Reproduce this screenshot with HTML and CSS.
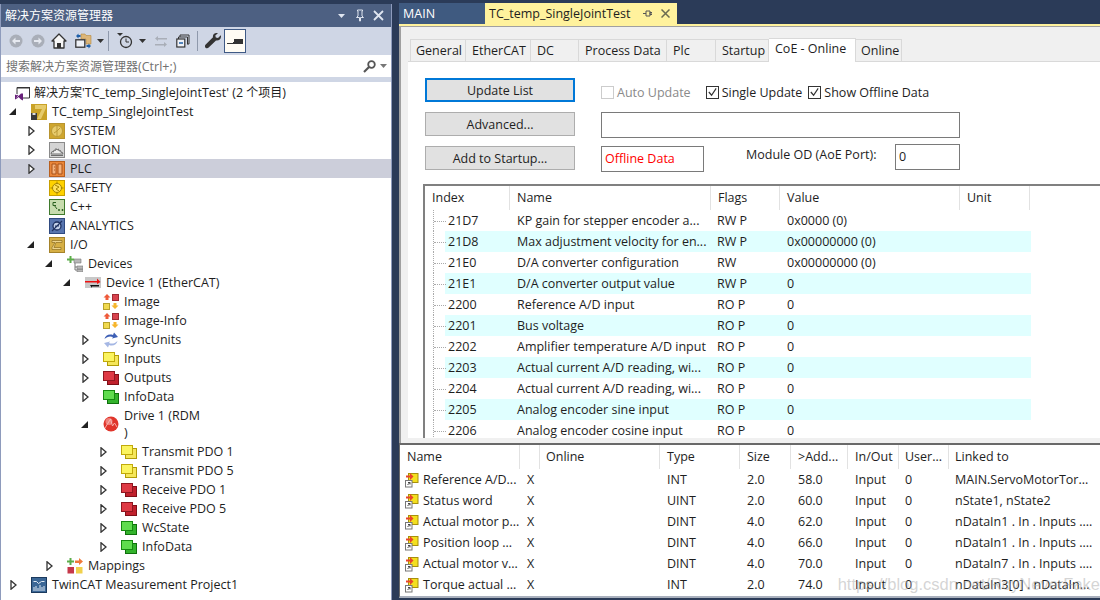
FILE: index.html
```html
<!DOCTYPE html>
<html lang="zh">
<head>
<meta charset="utf-8">
<title>TC_temp_SingleJointTest</title>
<link rel="stylesheet" href="styles.css">
</head>
<body>
<svg class="sprite" xmlns="http://www.w3.org/2000/svg">
  <defs>
    <symbol id="i-sol" viewBox="0 0 16 16"><path d="M3 9V2.500h12.500V13H9" fill="#fff" stroke="#333"/><path d="M3 2h13v1.500H3z" fill="#333"/><path d="M1 9.500v5l2-1v-3zM9 8.500v7l-2-1-2.500-2.500L3 13.500l-.5-1 1.500-1-1.500-1 .5-1L4.500 11 7 8.500z" fill="#68217a"/></symbol>
    <symbol id="i-proj" viewBox="0 0 16 16"><rect width="16" height="16" fill="#c9a227"/><path d="M4 1h11v3l-5 11H6l5-10H4z" fill="#e6cb6b"/><path d="M0 9h6v7H0z" fill="#3a3a3a"/><path d="M1.500 9h3v2h-3z" fill="#ddd"/></symbol>
    <symbol id="i-sys" viewBox="0 0 16 16"><rect x=".5" y=".5" width="15" height="15" fill="#cfa62e" stroke="#b8942f"/><circle cx="8" cy="8" r="5.500" fill="#e8cc6c" stroke="#bb9936"/><path d="M8 3v10M8 8l3-3M8 8l-3 2" stroke="#bb9936" fill="none"/></symbol>
    <symbol id="i-mot" viewBox="0 0 16 16"><rect x=".5" y=".5" width="15" height="15" fill="#d4d4d4" stroke="#8a8a8a"/><path d="M2 12h12l-1-2-1 .5-.5-2-1.500.5-.5-2-1.500 1L7 6.500 6.500 8.500 5 8l-.5 2-1.500-.5z" fill="#eee" stroke="#6d6d6d"/><path d="M2 13.500h12" stroke="#6d6d6d"/></symbol>
    <symbol id="i-plc" viewBox="0 0 16 16"><rect x=".5" y=".5" width="15" height="15" fill="#e9863a" stroke="#b85f1e"/><path d="M3 3h4v10H3zM9 3h4v10H9z" fill="#f5b27c" stroke="#a8521a"/><path d="M5 6h1M5 9h1" stroke="#a8521a"/></symbol>
    <symbol id="i-saf" viewBox="0 0 16 16"><rect x=".5" y=".5" width="15" height="15" fill="#ffd200" stroke="#c79f00"/><circle cx="8" cy="8" r="4.500" fill="#ffe25c" stroke="#a58400"/><path d="M6 5l4 2-3 2 3 2M8 1.500v2M8 12.500v2M1.500 8h2M12.500 8h2" stroke="#a58400" fill="none"/></symbol>
    <symbol id="i-cpp" viewBox="0 0 16 16"><rect x=".5" y=".5" width="15" height="15" fill="#c8dcae" stroke="#3f7a2c"/><path d="M7 3.500H4v3h3M5 6l3 4M9 11h2M10 10v2M12.500 11h2M13.500 10v2" stroke="#2d6120" fill="none"/></symbol>
    <symbol id="i-ana" viewBox="0 0 16 16"><rect x=".5" y=".5" width="15" height="15" fill="#5875ae" stroke="#2f4a80"/><circle cx="8" cy="8" r="4" fill="#c4d2ea" stroke="#1e3160" stroke-width="1.300"/><path d="M3 13L13 3M6 8h4" stroke="#1e3160" stroke-width="1.200"/></symbol>
    <symbol id="i-io" viewBox="0 0 16 16"><rect x=".5" y=".5" width="15" height="15" fill="#d6af45" stroke="#a5832a"/><path d="M3 3.500h10v2H7l-2 5h7v2H3v-2l3-5H3z" fill="#ecd38b" stroke="#8e6f20" stroke-width=".7"/></symbol>
    <symbol id="i-devs" viewBox="0 0 16 16"><path d="M7 3h7v4H7zM10 10h6v3h-6zM10 13.500h6V16h-6z" fill="#b8b8b8" stroke="#777" stroke-width=".6"/><path d="M8 7v7h2M8 11h2" stroke="#777" fill="none"/><path d="M2.500 0h2v2.500H7v2H4.500V7h-2V4.500H0v-2h2.500z" fill="#5cad4a"/></symbol>
    <symbol id="i-dev" viewBox="0 0 16 16"><rect y="2" width="16" height="11" fill="#c8c8c8"/><path d="M0 6h12V3.500L15.500 7 12 9V7.500H0z" fill="#ee1111"/><path d="M5 10h9v1.500H7V13z" fill="#111"/></symbol>
    <symbol id="i-img" viewBox="0 0 16 16"><path d="M4 0l3.500 3.500H5.500V6h-3V3.500H.5z" fill="#ef5a3a"/><rect x="9.500" y=".5" width="6" height="6" fill="#d8434d" stroke="#9f2a33"/><rect x=".5" y="9.500" width="6" height="6" fill="#f0d94f" stroke="#b6a22c"/><path d="M10.500 9h3v2.500h2L12 15l-3.500-3.500h2z" fill="#f6b52c"/></symbol>
    <symbol id="i-sync" viewBox="0 0 16 16"><path d="M1.500 7C2 3.500 6 1.500 10 3l1-2.500L15 5l-6 1.500 1-1.500C7 3.800 4 4.500 1.500 7z" fill="#3d5fb5"/><path d="M14.500 9c-.5 3.500-4.500 5.500-8.500 4l-1 2.500L1 11l6-1.500-1 1.500c3 1.200 6 .5 8.500-2z" fill="#a5b7e4"/></symbol>
    <symbol id="i-y" viewBox="0 0 16 16"><rect x="4.500" y="4.500" width="11" height="10" fill="#f5e65a" stroke="#b09c08"/><rect x=".5" y="1.500" width="11" height="9" fill="#fbf45f" stroke="#c1a90a"/></symbol>
    <symbol id="i-r" viewBox="0 0 16 16"><rect x="4.500" y="4.500" width="11" height="10" fill="#c0202c" stroke="#7e0f17"/><rect x=".5" y="1.500" width="11" height="9" fill="#df3a45" stroke="#8f1720"/></symbol>
    <symbol id="i-g" viewBox="0 0 16 16"><rect x="4.500" y="4.500" width="11" height="10" fill="#33b32c" stroke="#0f700c"/><rect x=".5" y="1.500" width="11" height="9" fill="#5fdc4e" stroke="#158a10"/></symbol>
    <symbol id="i-drive" viewBox="0 0 16 16"><circle cx="8" cy="8" r="7.500" fill="#e0352b"/><circle cx="6" cy="5.500" r="3.500" fill="#f0817a"/><path d="M2 12L7.500 3l2 7 2-3 2.500 4" stroke="#f7c4c0" stroke-width=".8" fill="none"/></symbol>
    <symbol id="i-map" viewBox="0 0 16 16"><path d="M2.500 0h2v2.500H7v2H4.500V7h-2V4.500H0v-2h2.500z" fill="#5cad4a"/><path d="M8 2.500h4V0l4 3.500L12 7V5H8z" fill="#ef7a3a"/><rect x=".5" y="9" width="6.500" height="6.500" fill="#c6384a"/><rect x="9" y="9" width="6.500" height="6.500" fill="#f1d14c"/></symbol>
    <symbol id="i-meas" viewBox="0 0 16 16"><rect x=".5" y=".5" width="15" height="15" fill="#3b6796" stroke="#1b3a5e"/><path d="M2.500 4.500h3l2 2 3-2h3" stroke="#dfe9f3" fill="none"/><path d="M3 14V10M5 14V9M7 14v-3M9 14V8M11 14v-4M13 14V9" stroke="#dfe9f3"/></symbol>
    <symbol id="i-var" viewBox="0 0 14 16"><rect x="3.500" y="1.500" width="9.500" height="9" fill="#f3df1f" stroke="#a78f0c"/><path d="M1 3.500h4V1l3.500 3.500L5 8V5.500H1z" fill="#e8452a"/><rect x=".5" y="8.500" width="6.500" height="6.500" fill="#fff" stroke="#777"/><path d="M2.500 13l2.500-2.500M3 10.500h2V12.500" stroke="#444" fill="none"/></symbol>
    <symbol id="t-open" viewBox="0 0 7 10"><path d="M1 .8L6 5 1 9.200z" fill="#fff" stroke="#333" stroke-width="1.300"/></symbol>
    <symbol id="t-shut" viewBox="0 0 7 7"><path d="M7 0v7H0z" fill="#222"/></symbol>
    <symbol id="t-drop" viewBox="0 0 7 4"><path d="M0 0h7L3.500 4z"/></symbol>
  </defs>
</svg>

<div class="app">
  <aside class="left">
    <header class="title">
      <span class="title-text">解决方案资源管理器</span>
      <span class="title-tools">
        <svg class="drop-sm" width="7" height="4"><use href="#t-drop"/></svg>
        <svg width="10" height="13" viewBox="0 0 10 13"><path d="M2.500 1h5v1H7v5l1.500 1.500H5.500V12h-1V8.500H1.500L3 7V2h-.5z" fill="none" stroke="#dfe5f0"/></svg>
        <svg width="11" height="11" viewBox="0 0 11 11"><path d="M1 1l9 9M10 1l-9 9" stroke="#dfe5f0" stroke-width="1.800"/></svg>
      </span>
    </header>
    <nav class="toolbar">
      <svg class="tb t1" width="18" height="18" viewBox="0 0 18 18"><circle cx="9" cy="9" r="6.500" fill="#a9aeb8"/><path d="M5 9l3.500-3.500V8H13v2H8.500v2.500z" fill="#e6e9f0"/></svg>
      <svg class="tb t2" width="18" height="18" viewBox="0 0 18 18"><circle cx="9" cy="9" r="6.500" fill="#a9aeb8"/><path d="M13 9L9.500 5.500V8H5v2h4.500v2.500z" fill="#e6e9f0"/></svg>
      <svg class="tb t2" width="16" height="16" viewBox="0 0 16 16"><path d="M8 1L1 8h2v7h10V8h2z" fill="#f6f6f6" stroke="#333" stroke-width="1.300" stroke-linejoin="round"/><path d="M6 15v-5h4v5z" fill="#333"/></svg>
      <svg class="tb t3" width="17" height="16" viewBox="0 0 17 16"><path d="M6 1h4l1 1.500h5V11h-5V6H6z" fill="#dcb67a" stroke="#b58a3c" stroke-width=".6"/><rect x=".8" y="6.800" width="9" height="7.400" fill="#eef1f7" stroke="#333" stroke-width="1.300"/><path d="M1 3l2.500-2.500V2h2v2h-2v1.500zM16 13l-2.500 2.500V14h-2v-2h2v-1.500z" fill="#1e5fa8"/></svg>
      <svg class="drop t4" width="7" height="4"><use href="#t-drop"/></svg>
      <span class="sep s1"></span>
      <svg class="tb t5" width="18" height="18" viewBox="0 0 18 18"><path d="M1 1h6L4 4z" fill="#333"/><circle cx="10" cy="10" r="5.500" fill="none" stroke="#333" stroke-width="1.300"/><path d="M10 6.500V10h3" fill="none" stroke="#333"/></svg>
      <svg class="drop t6" width="7" height="4"><use href="#t-drop"/></svg>
      <svg class="tb t7" width="14" height="14" viewBox="0 0 14 14"><path d="M13 4H4V2L1 4.500 4 7V5.500h9zM1 10h9V8l3 2.500L10 13v-1.500H1z" fill="#a9aeb8"/></svg>
      <svg class="tb t8" width="14" height="14" viewBox="0 0 14 14"><path d="M4 3V1h9v9h-2M2.500 5V3h9v7" fill="none" stroke="#333"/><rect x=".8" y="5" width="8" height="8" fill="#eef1f7" stroke="#333" stroke-width="1.200"/><path d="M3 9h4" stroke="#1e5fa8" stroke-width="1.500"/></svg>
      <span class="sep s2"></span>
      <svg class="tb t9" width="16" height="16" viewBox="0 0 16 16"><path d="M11.500 0c-2.500 0-4 2-3.500 4.300L.7 11.500c-1 1-1 2.300-.2 3.200s2.300.9 3.200-.1L11 7.500C13.700 8 16 6.300 16 3.500c0-.4 0-.8-.2-1.200L13 5 10.800 4.500 10.300 2.500 12.900.2C12.400 0 12 0 11.500 0z" fill="#333"/></svg>
      <button class="pin" type="button"><svg width="16" height="6" viewBox="0 0 16 6"><path d="M0 5h6V4h1V1h9v5H0z" fill="#333"/></svg></button>
    </nav>
    <div class="search">
      <span class="search-text"><span class="cjk">搜索解决方案资源管理器</span>(Ctrl+;)</span>
      <span class="search-ic">
        <svg width="13" height="13" viewBox="0 0 13 13"><circle cx="8.500" cy="4.500" r="3.300" fill="none" stroke="#555" stroke-width="1.800"/><path d="M6 7l-5 5" stroke="#555" stroke-width="2.200"/></svg>
        <svg class="drop-gr" width="7" height="4"><use href="#t-drop"/></svg>
      </span>
    </div>
    <div class="band"></div>
    <ul class="tree">
      <li class="row root"><svg class="ic"><use href="#i-sol"/></svg><span><span class="cjk">解决方案</span>'TC_temp_SingleJointTest' (2 <span class="cjk">个项目</span>)</span></li>
      <li class="row l0"><span class="tw"><svg class="sh"><use href="#t-shut"/></svg></span><svg class="ic"><use href="#i-proj"/></svg><span>TC_temp_SingleJointTest</span></li>
      <li class="row l1"><span class="tw"><svg class="op"><use href="#t-open"/></svg></span><svg class="ic"><use href="#i-sys"/></svg><span>SYSTEM</span></li>
      <li class="row l1"><span class="tw"><svg class="op"><use href="#t-open"/></svg></span><svg class="ic"><use href="#i-mot"/></svg><span>MOTION</span></li>
      <li class="row l1 sel"><span class="tw"><svg class="op"><use href="#t-open"/></svg></span><svg class="ic"><use href="#i-plc"/></svg><span>PLC</span></li>
      <li class="row l1"><span class="tw"></span><svg class="ic"><use href="#i-saf"/></svg><span>SAFETY</span></li>
      <li class="row l1"><span class="tw"></span><svg class="ic"><use href="#i-cpp"/></svg><span>C++</span></li>
      <li class="row l1"><span class="tw"></span><svg class="ic"><use href="#i-ana"/></svg><span>ANALYTICS</span></li>
      <li class="row l1"><span class="tw"><svg class="sh"><use href="#t-shut"/></svg></span><svg class="ic"><use href="#i-io"/></svg><span>I/O</span></li>
      <li class="row l2"><span class="tw"><svg class="sh"><use href="#t-shut"/></svg></span><svg class="ic"><use href="#i-devs"/></svg><span>Devices</span></li>
      <li class="row l3"><span class="tw"><svg class="sh"><use href="#t-shut"/></svg></span><svg class="ic"><use href="#i-dev"/></svg><span>Device 1 (EtherCAT)</span></li>
      <li class="row l4"><span class="tw"></span><svg class="ic"><use href="#i-img"/></svg><span>Image</span></li>
      <li class="row l4"><span class="tw"></span><svg class="ic"><use href="#i-img"/></svg><span>Image-Info</span></li>
      <li class="row l4"><span class="tw"><svg class="op"><use href="#t-open"/></svg></span><svg class="ic"><use href="#i-sync"/></svg><span>SyncUnits</span></li>
      <li class="row l4"><span class="tw"><svg class="op"><use href="#t-open"/></svg></span><svg class="ic"><use href="#i-y"/></svg><span>Inputs</span></li>
      <li class="row l4"><span class="tw"><svg class="op"><use href="#t-open"/></svg></span><svg class="ic"><use href="#i-r"/></svg><span>Outputs</span></li>
      <li class="row l4"><span class="tw"><svg class="op"><use href="#t-open"/></svg></span><svg class="ic"><use href="#i-g"/></svg><span>InfoData</span></li>
      <li class="row l4 tall"><span class="tw"><svg class="sh"><use href="#t-shut"/></svg></span><svg class="ic"><use href="#i-drive"/></svg><span class="wrap">Drive 1 (RDM<br>)</span></li>
      <li class="row l5"><span class="tw"><svg class="op"><use href="#t-open"/></svg></span><svg class="ic"><use href="#i-y"/></svg><span>Transmit PDO 1</span></li>
      <li class="row l5"><span class="tw"><svg class="op"><use href="#t-open"/></svg></span><svg class="ic"><use href="#i-y"/></svg><span>Transmit PDO 5</span></li>
      <li class="row l5"><span class="tw"><svg class="op"><use href="#t-open"/></svg></span><svg class="ic"><use href="#i-r"/></svg><span>Receive PDO 1</span></li>
      <li class="row l5"><span class="tw"><svg class="op"><use href="#t-open"/></svg></span><svg class="ic"><use href="#i-r"/></svg><span>Receive PDO 5</span></li>
      <li class="row l5"><span class="tw"><svg class="op"><use href="#t-open"/></svg></span><svg class="ic"><use href="#i-g"/></svg><span>WcState</span></li>
      <li class="row l5"><span class="tw"><svg class="op"><use href="#t-open"/></svg></span><svg class="ic"><use href="#i-g"/></svg><span>InfoData</span></li>
      <li class="row l2"><span class="tw"><svg class="op"><use href="#t-open"/></svg></span><svg class="ic"><use href="#i-map"/></svg><span>Mappings</span></li>
      <li class="row l0"><span class="tw"><svg class="op"><use href="#t-open"/></svg></span><svg class="ic"><use href="#i-meas"/></svg><span>TwinCAT Measurement Project1</span></li>
    </ul>
  </aside>

  <main class="right">
    <div class="doc-tabs">
      <span class="doc-tab">MAIN</span>
      <span class="doc-tab active">TC_temp_SingleJointTest
        <svg class="doc-pin" width="9" height="9" viewBox="0 0 9 9"><path d="M0 4.500h3M3 2h4v5H3zM7 3.500h2v2H7z" fill="none" stroke="#555"/></svg>
        <svg class="doc-x" width="9" height="9" viewBox="0 0 9 9"><path d="M.5.500l8 8M8.500.500l-8 8" stroke="#6b6b50" stroke-width="1.500"/></svg>
      </span>
    </div>
    <div class="doc-line"></div>
    <section class="upper">
      <div class="tabs">
        <span class="tab w1">General</span>
        <span class="tab w2">EtherCAT</span>
        <span class="tab w3">DC</span>
        <span class="tab w4">Process Data</span>
        <span class="tab w5">Plc</span>
        <span class="tab w6">Startup</span>
        <span class="tab w7 on">CoE - Online</span>
        <span class="tab w8">Online</span>
      </div>
      <div class="page">
        <div class="form">
          <div class="btns">
            <button class="btn focus" type="button">Update List</button>
            <button class="btn" type="button">Advanced...</button>
            <button class="btn" type="button">Add to Startup...</button>
          </div>
          <div class="opts">
            <div class="checks">
              <span class="chk off"></span><span class="lbl dis">Auto Update</span>
              <span class="chk"><svg width="12" height="12" viewBox="0 0 12 12"><path d="M2 6l3 3.500L10 2" fill="none" stroke="#333" stroke-width="1.300"/></svg></span><span class="lbl l-s">Single Update</span>
              <span class="chk"><svg width="12" height="12" viewBox="0 0 12 12"><path d="M2 6l3 3.500L10 2" fill="none" stroke="#333" stroke-width="1.300"/></svg></span><span class="lbl">Show Offline Data</span>
            </div>
            <div class="box wide"></div>
            <div class="last">
              <div class="box offline">Offline Data</div>
              <span class="mod">Module OD (AoE Port):</span>
              <div class="box port">0</div>
            </div>
          </div>
        </div>
        <div class="list">
          <div class="l-head">
            <span class="h h1">Index</span><span class="h h2">Name</span><span class="h h3">Flags</span><span class="h h4">Value</span><span class="h h5">Unit</span><span class="h h6"></span>
          </div>
          <div class="l-row"><span class="dots"></span><span class="c1">21D7</span><span class="c2">KP gain for stepper encoder a...</span><span class="c3">RW P</span><span class="c4">0x0000 (0)</span></div>
          <div class="l-row alt"><span class="dots"></span><span class="c1">21D8</span><span class="c2">Max adjustment velocity for en...</span><span class="c3">RW P</span><span class="c4">0x00000000 (0)</span></div>
          <div class="l-row"><span class="dots"></span><span class="c1">21E0</span><span class="c2">D/A converter configuration</span><span class="c3">RW</span><span class="c4">0x00000000 (0)</span></div>
          <div class="l-row alt"><span class="dots"></span><span class="c1">21E1</span><span class="c2">D/A converter output value</span><span class="c3">RW P</span><span class="c4">0</span></div>
          <div class="l-row"><span class="dots"></span><span class="c1">2200</span><span class="c2">Reference A/D input</span><span class="c3">RO P</span><span class="c4">0</span></div>
          <div class="l-row alt"><span class="dots"></span><span class="c1">2201</span><span class="c2">Bus voltage</span><span class="c3">RO P</span><span class="c4">0</span></div>
          <div class="l-row"><span class="dots"></span><span class="c1">2202</span><span class="c2">Amplifier temperature A/D input</span><span class="c3">RO P</span><span class="c4">0</span></div>
          <div class="l-row alt"><span class="dots"></span><span class="c1">2203</span><span class="c2">Actual current A/D reading, wi...</span><span class="c3">RO P</span><span class="c4">0</span></div>
          <div class="l-row"><span class="dots"></span><span class="c1">2204</span><span class="c2">Actual current A/D reading, wi...</span><span class="c3">RO P</span><span class="c4">0</span></div>
          <div class="l-row alt"><span class="dots"></span><span class="c1">2205</span><span class="c2">Analog encoder sine input</span><span class="c3">RO P</span><span class="c4">0</span></div>
          <div class="l-row"><span class="dots"></span><span class="c1">2206</span><span class="c2">Analog encoder cosine input</span><span class="c3">RO P</span><span class="c4">0</span></div>
        </div>
      </div>
    </section>
    <div class="split"></div>
    <section class="lower">
      <div class="v-head">
        <span class="vh v1">Name</span><span class="vh v2"></span><span class="vh v3">Online</span><span class="vh v4">Type</span><span class="vh v5">Size</span><span class="vh v6">&gt;Add...</span><span class="vh v7">In/Out</span><span class="vh v8">User...</span><span class="vh v9">Linked to</span>
      </div>
      <div class="v-row"><span class="v1 nm"><svg class="vi"><use href="#i-var"/></svg>Reference A/D...</span><span class="v2 x">X</span><span class="v3"></span><span class="v4">INT</span><span class="v5">2.0</span><span class="v6">58.0</span><span class="v7">Input</span><span class="v8">0</span><span class="v9">MAIN.ServoMotorTor...</span></div>
      <div class="v-row"><span class="v1 nm"><svg class="vi"><use href="#i-var"/></svg>Status word</span><span class="v2 x">X</span><span class="v3"></span><span class="v4">UINT</span><span class="v5">2.0</span><span class="v6">60.0</span><span class="v7">Input</span><span class="v8">0</span><span class="v9">nState1, nState2</span></div>
      <div class="v-row"><span class="v1 nm"><svg class="vi"><use href="#i-var"/></svg>Actual motor p...</span><span class="v2 x">X</span><span class="v3"></span><span class="v4">DINT</span><span class="v5">4.0</span><span class="v6">62.0</span><span class="v7">Input</span><span class="v8">0</span><span class="v9">nDataIn1 . In . Inputs ....</span></div>
      <div class="v-row"><span class="v1 nm"><svg class="vi"><use href="#i-var"/></svg>Position loop ...</span><span class="v2 x">X</span><span class="v3"></span><span class="v4">DINT</span><span class="v5">4.0</span><span class="v6">66.0</span><span class="v7">Input</span><span class="v8">0</span><span class="v9">nDataIn1 . In . Inputs ....</span></div>
      <div class="v-row"><span class="v1 nm"><svg class="vi"><use href="#i-var"/></svg>Actual motor v...</span><span class="v2 x">X</span><span class="v3"></span><span class="v4">DINT</span><span class="v5">4.0</span><span class="v6">70.0</span><span class="v7">Input</span><span class="v8">0</span><span class="v9">nDataIn7 . In . Inputs ....</span></div>
      <div class="v-row"><span class="v1 nm"><svg class="vi"><use href="#i-var"/></svg>Torque actual ...</span><span class="v2 x">X</span><span class="v3"></span><span class="v4">INT</span><span class="v5">2.0</span><span class="v6">74.0</span><span class="v7">Input</span><span class="v8">0</span><span class="v9">nDataIn3[0] . nDataIn...</span></div>
      <span class="mark">https://blog.csdn.net/RoyNeverFake</span>
    </section>
  </main>
</div>
</body>
</html>
```
FILE: styles.css
```css
* { box-sizing: border-box; }
html, body { margin: 0; padding: 0; }
body {
  width: 1100px;
  height: 600px;
  overflow: hidden;
  background: #2b3b58;
  font: 12.5px/19px "Open Sans", "Noto Sans CJK SC", sans-serif;
  color: #1e1e1e;
}
.sprite { position: absolute; width: 0; height: 0; }
.cjk { font-size: 12px; }
.app { display: flex; height: 600px; }

/* left */
.left { width: 392px; margin-top: 4px; display: flex; flex-direction: column; background: #fff; border-left: 1px solid #8e9bbc; border-right: 1px solid #8e9bbc; flex: none; }
.title { height: 23px; background: #4d6082; color: #fff; display: flex; align-items: center; justify-content: space-between; padding: 0 7px 0 4px; flex: none; }
.title-text { font-size: 12px; }
.title-tools { display: flex; align-items: center; gap: 8px; }
.drop-sm { fill: #dfe5f0; margin-right: 2px; }
.toolbar { height: 28px; background: #cfd6e5; display: flex; align-items: center; padding-left: 6px; flex: none; }
.tb { flex: none; }
.t2 { margin-left: 4px; }
.t3 { margin-left: 8px; }
.t4 { margin-left: 5px; }
.s1 { margin-left: 4px; }
.t5 { margin-left: 7px; }
.t6 { margin-left: 5px; }
.t7 { margin-left: 8px; }
.t8 { margin-left: 8px; }
.s2 { margin-left: 7px; }
.t9 { margin-left: 7px; }
.drop { fill: #333; flex: none; }
.sep { width: 1px; height: 20px; background: #8f99ac; flex: none; }
.pin { width: 22px; height: 24px; margin-left: 3px; padding: 0; background: #fffcf4; border: 1px solid #3f5a85; display: flex; align-items: center; justify-content: center; }
.search { height: 22px; background: #fff; display: flex; align-items: center; justify-content: space-between; padding: 0 4px 0 5px; flex: none; color: #717171; }
.search-ic { display: flex; align-items: center; gap: 4px; }
.drop-gr { fill: #777; }
.band { height: 5px; background: #cfd6e5; flex: none; }
.tree { list-style: none; margin: 0; padding: 1px 0 0; flex: 1; }
.row { height: 19px; display: flex; align-items: center; white-space: nowrap; }
.root { padding-left: 13px; }
.root .ic { margin-right: 4px; }
.sel { background: #ccceda; }
.tw { width: 22px; height: 19px; flex: none; display: flex; align-items: center; }
.op { width: 7px; height: 10px; margin-left: 1px; }
.sh { width: 7px; height: 7px; }
.ic { width: 16px; height: 16px; margin-right: 5px; flex: none; }
.l0 { padding-left: 8px; }
.l1 { padding-left: 26px; }
.l2 { padding-left: 44px; }
.l3 { padding-left: 62px; }
.l4 { padding-left: 80px; }
.l5 { padding-left: 98px; }
.tall { height: 36px; }
.wrap { line-height: 17px; }

/* right */
.right { flex: 1; margin-left: 7px; min-width: 0; display: flex; flex-direction: column; }
.doc-tabs { display: flex; height: 24px; padding-top: 3px; flex: none; }
.doc-tab { display: flex; align-items: center; height: 21px; }
.doc-tab:first-child { width: 86px; background: #3f5a80; color: #fff; padding-left: 4px; }
.doc-tab.active { width: 192px; background: #fff29d; color: #1e1e1e; padding-left: 4px; }
.doc-pin { margin-left: 12px; }
.doc-x { margin-left: 9px; }
.doc-line { height: 2px; background: #fff29d; flex: none; }
.upper { height: 412px; flex: none; background: #f0f0f0; border: 1px solid #a0a0a0; border-width: 1px 0 0 2px; display: flex; flex-direction: column; overflow: hidden; }
.tabs { display: flex; height: 34px; padding: 11px 0 0 9px; flex: none; align-items: flex-end; position: relative; z-index: 1; }
.tab { height: 22px; border: 1px solid #d9d9d9; border-bottom: 0; border-left: 0; padding: 1px 0 0 6px; white-space: nowrap; background: #f0f0f0; }
.tab:first-child { border-left: 1px solid #d9d9d9; padding-left: 5px; }
.w1 { width: 56px; }
.w2 { width: 65px; }
.w3 { width: 48px; }
.w4 { width: 88px; }
.w5 { width: 49px; }
.w6 { width: 53px; }
.w7 { width: 87px; height: 24px; background: #fff; padding-top: 0; margin-bottom: -1px; }
.w8 { width: 46px; padding-left: 5px; }
.page { flex: 1; margin-left: 7px; background: #fff; border-top: 1px solid #d9d9d9; padding: 16px 0 0 17px; min-height: 0; }
.form { display: flex; height: 106px; }
.btns { width: 150px; display: flex; flex-direction: column; gap: 10px; flex: none; }
.btn { height: 24px; width: 150px; background: #e1e1e1; border: 1px solid #adadad; font: inherit; color: #1e1e1e; padding: 0; }
.btn.focus { border: 2px solid #0078d7; }
.opts { margin-left: 26px; padding-top: 6px; display: flex; flex-direction: column; }
.checks { display: flex; align-items: center; height: 16px; }
.chk { width: 13px; height: 13px; border: 1px solid #333; background: #fff; display: flex; flex: none; align-items: center; justify-content: center; }
.chk.off { border-color: #ccc; }
.lbl { margin-left: 3px; margin-right: 7px; white-space: nowrap; }
.lbl.dis { color: #8a8a8a; margin-right: 15px; }
.lbl.l-s { margin-right: 6px; }
.box { background: #fff; border: 1px solid #7a7a7a; }
.wide { width: 359px; height: 26px; margin-top: 12px; }
.last { display: flex; margin-top: 6px; align-items: flex-start; }
.offline { width: 103px; height: 26px; margin-top: 2px; color: #f00; padding: 2px 3px; }
.mod { margin-left: 42px; width: 149px; white-space: nowrap; margin-top: 1px; }
.port { width: 65px; height: 26px; padding: 2px 3px; }
.list { border-top: 2px solid #808080; border-left: 2px solid #808080; margin-left: -2px; height: 255px; overflow: hidden; }
.l-head { display: flex; height: 24px; }
.h { display: block; height: 24px; padding: 2px 0 0 7px; border-right: 1px solid #e2e2e2; flex: none; }
.h1 { width: 85px; }
.h2 { width: 201px; }
.h3 { width: 69px; }
.h4 { width: 180px; }
.h5 { width: 70px; }
.h6 { border: 0; }
.l-row { display: flex; height: 21px; align-items: center; white-space: nowrap; }
.l-row.alt { background: linear-gradient(to right, #fff 20px, #e0ffff 20px, #e0ffff 606px, #fff 606px); }
.dots { width: 13px; height: 21px; margin-left: 8px; flex: none; border-left: 1px dotted #aaa; }
.dots::after { content: ""; display: block; width: 12px; height: 11px; border-bottom: 1px dotted #aaa; }
.c1 { width: 69px; margin-left: 2px; flex: none; }
.c2 { width: 200px; flex: none; }
.c3 { width: 70px; flex: none; }
.split { height: 5px; background: #f0f0f0; flex: none; border-left: 2px solid #a0a0a0; }
.lower { position: relative; height: 155px; flex: none; background: #fff; border-top: 2px solid #696969; border-left: 1px solid #696969; border-bottom: 2px solid #a9b0bd; overflow: hidden; }
.v-head { display: flex; height: 24px; }
.vh { height: 24px; padding: 2px 0 0 6px; border-right: 1px solid #e2e2e2; flex: none; }
.v-row { display: flex; height: 21px; align-items: center; white-space: nowrap; }
.v1 { width: 120px; flex: none; }
.v2 { width: 20px; flex: none; }
.v3 { width: 120px; flex: none; }
.v4 { width: 80px; flex: none; }
.v5 { width: 51px; flex: none; }
.v6 { width: 57px; flex: none; }
.v7 { width: 51px; flex: none; }
.v8 { width: 50px; flex: none; }
.v9 { width: 151px; flex: none; }
.v-head .v9 { border: 0; }
.v-row span { padding-left: 6px; }
.v-head .v1 { padding-left: 7px; }
.v-head .v4, .v-head .v5, .v-head .v6, .v-head .v7,
.v-row .v4, .v-row .v5, .v-row .v6, .v-row .v7 { padding-left: 7px; }
.v-row .nm { display: flex; align-items: center; padding-left: 5px; }
.vi { width: 14px; height: 16px; margin-right: 4px; flex: none; }
.v-row .x { padding-left: 7px; }
.mark { position: absolute; right: 0; bottom: 1px; font: 16.500px/22px "Liberation Sans", sans-serif; color: rgba(170, 170, 170, .5); white-space: nowrap; }
```
